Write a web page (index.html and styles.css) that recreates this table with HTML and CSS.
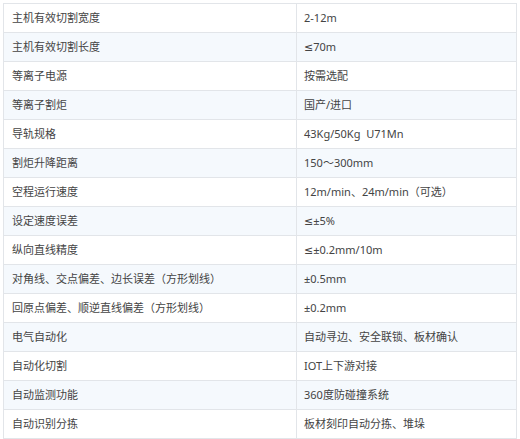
FILE: index.html
```html
<!DOCTYPE html>
<html lang="zh">
<head>
<meta charset="utf-8">
<link rel="stylesheet" href="styles.css">
</head>
<body>
<div class="wrap">
<table class="spec">
<tbody>
<tr><td class="k">主机有效切割宽度</td><td class="v">2-12m</td></tr>
<tr><td class="k">主机有效切割长度</td><td class="v">≤70m</td></tr>
<tr><td class="k">等离子电源</td><td class="v">按需选配</td></tr>
<tr><td class="k">等离子割炬</td><td class="v">国产/进口</td></tr>
<tr><td class="k">导轨规格</td><td class="v">43Kg/50Kg&nbsp;&nbsp;U71Mn</td></tr>
<tr><td class="k">割炬升降距离</td><td class="v">150～300mm</td></tr>
<tr><td class="k">空程运行速度</td><td class="v">12m/min、24m/min（可选）</td></tr>
<tr><td class="k">设定速度误差</td><td class="v">≤±5%</td></tr>
<tr><td class="k">纵向直线精度</td><td class="v">≤±0.2mm/10m</td></tr>
<tr><td class="k">对角线、交点偏差、边长误差（方形划线）</td><td class="v">±0.5mm</td></tr>
<tr><td class="k">回原点偏差、顺逆直线偏差（方形划线）</td><td class="v">±0.2mm</td></tr>
<tr><td class="k">电气自动化</td><td class="v">自动寻边、安全联锁、板材确认</td></tr>
<tr><td class="k">自动化切割</td><td class="v">IOT上下游对接</td></tr>
<tr><td class="k">自动监测功能</td><td class="v">360度防碰撞系统</td></tr>
<tr><td class="k">自动识别分拣</td><td class="v">板材刻印自动分拣、堆垛</td></tr>
</tbody>
</table>
</div>
</body>
</html>
```
FILE: styles.css
```css
html, body {
  margin: 0;
  padding: 0;
  background: #ffffff;
}
.wrap {
  padding: 3px 3px 0 3px;
}
.spec {
  border-collapse: collapse;
  width: 514px;
  table-layout: fixed;
  font-family: "Noto Sans", "DejaVu Sans", "Noto Sans CJK SC", sans-serif;
  font-size: 11px;
  color: #444444;
}
.spec td {
  border: 1px solid #e2e5e9;
  height: 29px;
  padding: 0 8px;
  box-sizing: border-box;
  line-height: 14px;
  vertical-align: middle;
  white-space: nowrap;
}
.spec tr:nth-child(even) td {
  background: #f5f9fd;
}
.spec td.k {
  width: 293px;
}
.spec td.v {
  padding-left: 7px;
}
```
